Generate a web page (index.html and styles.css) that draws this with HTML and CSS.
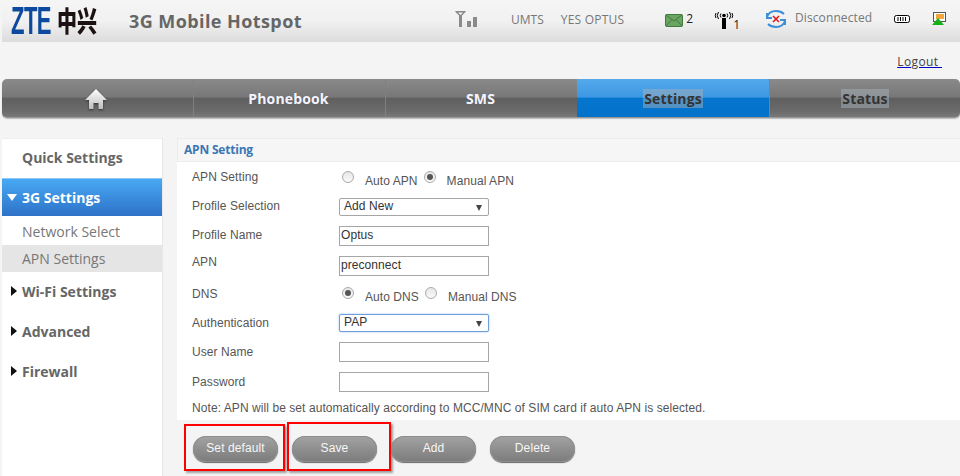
FILE: index.html
```html
<!DOCTYPE html>
<html lang="en">
<head>
<meta charset="utf-8">
<title>3G Mobile Hotspot</title>
<link rel="stylesheet" href="styles.css">
</head>
<body>
<header class="top">
  <div class="logo"><span class="logo-zte">ZTE</span><span class="logo-cn">中兴</span></div>
  <div class="product">3G Mobile Hotspot</div>
  <div class="status">
    <svg class="i-signal" width="24" height="18" viewBox="0 0 24 18"><path d="M1 1h11l-1 1.500-3 3V17H5V5.500L2 2.500zM4 2.500l2.500 2.500L9 2.500z" fill="#8a8a8a" fill-rule="evenodd"/><rect x="13" y="11" width="4" height="6" fill="#8a8a8a"/><rect x="19" y="7" width="4" height="10" fill="#8a8a8a"/></svg>
    <span class="s-net">UMTS</span>
    <span class="s-op">YES OPTUS</span>
    <svg class="i-mail" width="18" height="13" viewBox="0 0 18 13"><rect x=".5" y=".5" width="17" height="12" rx="1" fill="#6aa564" stroke="#3f7a3f"/><path d="M1 1l8 6 8-6M1 12l6-6.500M17 12l-6-6.500" fill="none" stroke="#3f7a3f"/></svg>
    <span class="s-count">2</span>
    <svg class="i-wifi" width="20" height="18" viewBox="0 0 20 18"><path d="M8 7h4v11H8z" fill="#000"/><circle cx="10" cy="4.500" r="1.800" fill="#000"/><path d="M7 2.500Q5.500 4.500 7 6.500M13 2.500q1.500 2 0 4M4.500 1Q2 4.500 4.500 8M15.500 1q2.500 3.500 0 7M2 2Q.5 4.500 2 7M18 2q1.500 2.500 0 5" fill="none" stroke="#000"/></svg>
    <span class="s-wifi-n">1</span>
    <svg class="i-conn" width="20" height="20" viewBox="0 0 20 20"><path d="M1 8Q3 2 10 2q5 0 8 3M1 4v5h5M19 12q-2 6-9 6-5 0-8-3M19 16v-5h-5" fill="none" stroke="#3a8fd6" stroke-width="2"/><path d="M7 7l6 6M13 7l-6 6" stroke="#e01b1b" stroke-width="1.600"/></svg>
    <span class="s-conn">Disconnected</span>
    <svg class="i-batt" width="16" height="8" viewBox="0 0 16 8"><rect x=".5" y=".5" width="15" height="7" rx="2" fill="#fff" stroke="#000"/><path d="M4 2v4M6.500 2v4M9 2v4M11.500 2v4" stroke="#000"/></svg>
    <svg class="i-sim" width="14" height="13" viewBox="0 0 14 13"><rect x="1.500" y=".5" width="12" height="9" fill="#fff" stroke="#555"/><rect x="4" y="2" width="8" height="5" fill="#f4a63c"/><path d="M0 13l6-7 6 7z" fill="#18b018"/></svg>
  </div>
</header>

<div class="logout-row"><a class="logout" href="#">Logout&nbsp;</a></div>

<nav class="nav">
  <a class="nav-item" href="#"><svg class="i-home" width="24" height="22" viewBox="0 0 24 22"><defs><linearGradient id="homeFill" x1="0" y1="0" x2="0" y2="1"><stop offset="0" stop-color="#fff"/><stop offset="1" stop-color="#bdbdbd"/></linearGradient></defs><path d="M12 1L23 12h-4v9h-4.500v-6h-5v6H5v-9H1z" fill="url(#homeFill)"/></svg></a>
  <a class="nav-item" href="#">Phonebook</a>
  <a class="nav-item" href="#">SMS</a>
  <a class="nav-item active" href="#"><span class="sel">Settings</span></a>
  <a class="nav-item last" href="#"><span class="sel">Status</span></a>
</nav>

<div class="main">
  <aside class="side">
    <div class="side-head quick">Quick Settings</div>
    <div class="side-head open"><span class="tri-down"></span>3G Settings</div>
    <div class="side-sub">Network Select</div>
    <div class="side-sub cur">APN Settings</div>
    <div class="side-head"><span class="tri-right"></span>Wi-Fi Settings</div>
    <div class="side-head"><span class="tri-right"></span>Advanced</div>
    <div class="side-head"><span class="tri-right"></span>Firewall</div>
  </aside>

  <section class="content">
    <h2 class="title">APN Setting</h2>
    <div class="form">
      <div class="row r1"><span class="lab">APN Setting</span><div class="radios"><span class="radio"></span><span class="rl">Auto APN</span><span class="radio second on"></span><span class="rl">Manual APN</span></div></div>
      <div class="row r2"><span class="lab">Profile Selection</span><div class="select">Add New<span class="caret"></span></div></div>
      <div class="row r3"><span class="lab">Profile Name</span><div class="input">Optus</div></div>
      <div class="row r4"><span class="lab">APN</span><div class="input">preconnect</div></div>
      <div class="row r5"><span class="lab">DNS</span><div class="radios"><span class="radio on"></span><span class="rl">Auto DNS</span><span class="radio second"></span><span class="rl">Manual DNS</span></div></div>
      <div class="row r6"><span class="lab">Authentication</span><div class="select focus">PAP<span class="caret"></span></div></div>
      <div class="row r7"><span class="lab">User Name</span><div class="input"></div></div>
      <div class="row r8"><span class="lab">Password</span><div class="input"></div></div>
      <p class="note">Note: APN will be set automatically according to MCC/MNC of SIM card if auto APN is selected.</p>
    </div>
    <div class="actions">
      <button class="btn mark-a">Set default</button>
      <button class="btn mark-b">Save</button>
      <button class="btn">Add</button>
      <button class="btn">Delete</button>
    </div>
  </section>
</div>
</body>
</html>
```
FILE: styles.css
```css
* { box-sizing: border-box; }
html, body { margin: 0; padding: 0; }
body {
  width: 960px;
  height: 476px;
  overflow: hidden;
  background: #f4f4f4;
  font-family: "Liberation Sans", Arial, sans-serif;
  font-size: 12px;
  color: #555;
}

/* header */
.top {
  height: 42px;
  margin-left: 2px;
  display: flex;
  align-items: flex-start;
  background: linear-gradient(#f5f5f5 0, #f1f1f1 50%, #dcdcdc 100%);
}
.logo { display: flex; align-items: center; height: 36px; margin: 3px 0 0 9px; width: 118px; }
.logo-zte {
  display: inline-block;
  width: 46px;
  font: bold 38px/36px "Liberation Sans", sans-serif;
  color: #0b4a9e;
  transform: scaleX(.58);
  transform-origin: left center;
  letter-spacing: -1px;
}
.logo-cn {
  font: 900 20px/36px "Noto Sans CJK SC", sans-serif;
  color: #1d1212;
  transform: scaleY(1.4);
}
.product {
  font: 700 18px/24px "Open Sans", sans-serif;
  letter-spacing: .42px;
  color: #666;
  margin-top: 9px;
}
.status { flex: 1; display: flex; height: 42px; font-family: "Open Sans", sans-serif; }
.status svg { display: block; flex: none; }
.i-signal { margin: 10px 0 0 152px; }
.s-net { margin: 11px 0 0 33px; font-size: 12px; line-height: 17px; color: #777; }
.s-op { margin: 11px 0 0 17px; font-size: 12px; line-height: 17px; letter-spacing: .22px; color: #777; }
.i-mail { margin: 14px 0 0 41px; }
.s-count { margin: 11px 0 0 3px; font-size: 12px; line-height: 16px; color: #222; }
.i-wifi { margin: 11px 0 0 21px; }
.s-wifi-n { margin: 17px 0 0 -1px; font-size: 12px; line-height: 16px; color: #222; }
.i-conn { margin: 9px 0 0 26px; }
.s-conn { margin: 9px 0 0 9px; font-size: 12px; line-height: 17px; letter-spacing: .1px; color: #777; }
.i-batt { margin: 15px 0 0 22px; }
.i-sim { margin: 12px 0 0 22px; }

.logout-row { height: 37px; display: flex; justify-content: flex-end; padding: 12px 18px 0 0; }
.logout { font: 12px/16px "Open Sans", sans-serif; letter-spacing: .4px; color: #444; text-decoration-color: #00c; }

/* nav */
.nav {
  height: 39px;
  margin-left: 2px;
  display: grid;
  grid-template-columns: 191px 192px 192px 192px 191px;
  border-radius: 5px;
  overflow: hidden;
  background: linear-gradient(#8a8a8a 0, #777 48%, #5f5f5f 50%, #6b6b6b 85%, #7a7a7a 100%);
  border-bottom: 1px solid #999;
  box-shadow: 0 1px 1px #bbb;
}
.nav-item {
  display: flex;
  align-items: center;
  justify-content: center;
  padding: 1px 2px 0 0;
  border-left: 1px solid #808080;
  font: 700 14px/19px "Open Sans", sans-serif;
  letter-spacing: .15px;
  color: #f4f4ff;
  text-decoration: none;
}
.nav-item:first-child { border-left: 0; padding-right: 4px; }
.nav-item.active { background: linear-gradient(#55a9ec 0, #3d97e2 48%, #0575cd 50%, #0272cb 100%); border-left: 0; padding-right: 0; }
.nav-item.last { padding-right: 0; }
.sel { background: rgba(165,175,185,.5); color: #333; padding: 0 1px; }
.i-home { filter: drop-shadow(0 1px 1px #333); }

/* main */
.main { display: flex; margin: 20px 0 0 2px; height: 338px; }
.side { width: 161px; background: #fff; border-right: 1px solid #e8e8e8; border-top: 1px solid #eee; flex: none; }
.side-head {
  height: 40px;
  padding-left: 20px;
  font: 700 14px/40px "Open Sans", sans-serif;
  color: #666;
  position: relative;
}
.side-head.quick { height: 39px; line-height: 38px; }
.side-head.open {
  height: 38px;
  line-height: 38px;
  color: #fff;
  background: linear-gradient(#48a8f4, #2e72c8);
  border-top: 1px solid #8cc6f5;
}
.side-sub { font: 14px/27px "Open Sans", sans-serif; height: 27px; padding-left: 20px; color: #777; }
.side-sub:nth-child(3) { height: 29px; line-height: 31px; }
.side-sub.cur { background: #e5e5e5; }
.side-sub + .side-head { height: 40px; line-height: 39px; }
.tri-down { position: absolute; left: 5px; top: 15px; border: 5.500px solid transparent; border-top: 7px solid #fff; border-bottom: 0; }
.tri-right { position: absolute; left: 9px; top: 14px; border: 5px solid transparent; border-left: 6px solid #111; border-right: 0; }

.content { margin-left: 14px; flex: 1; }
.title {
  margin: 0;
  height: 24px;
  padding-left: 6px;
  font: 700 12px/22px "Open Sans", sans-serif;
  letter-spacing: -.2px;
  color: #3b76b5;
  background: #f6f6f6;
  border: 1px solid #ececec;
  border-width: 1px 0 1px 1px;
}
.form { background: #fff; height: 258px; padding-left: 15px; letter-spacing: .07px; }
.row { display: flex; align-items: flex-start; padding-top: 8px; line-height: 14px; color: #555; }
.lab { width: 147px; flex: none; }
.r1 { height: 29px; }
.r2 { height: 29px; }
.r3 { height: 27px; }
.r4 { height: 32px; }
.r5 { height: 29px; }
.r6 { height: 29px; }
.r7 { height: 30px; }
.r8 { height: 26px; }
.radios { display: flex; align-items: flex-start; color: #555; padding-left: 3px; }
.r1 .radios { margin-top: -1px; }
.r5 .radios { margin-top: -2px; }
.radio {
  width: 12px;
  height: 12px;
  border-radius: 50%;
  border: 1px solid #aaa;
  background: linear-gradient(#e6e6e6, #fafafa);
  flex: none;
  margin-top: 2px;
  position: relative;
}
.radio.second { margin-left: 6px; }
.radio.on::after { content: ""; position: absolute; left: 2px; top: 2px; width: 6px; height: 6px; border-radius: 50%; background: #555; }
.rl { margin-top: 5px; padding-left: 11px; }
.select, .input {
  width: 150px;
  height: 20px;
  border: 1px solid #a6a6a6;
  background: #fff;
  font: 12px/17px "Liberation Sans", sans-serif;
  color: #333;
  position: relative;
  padding-left: 1px;
}
.select { height: 18px; line-height: 15px; padding-left: 4px; border-radius: 2px; }
.r2 .select { margin-top: -1px; }
.r3 .input { margin-top: -2px; }
.r4 .input { margin-top: 1px; }
.r6 .select { margin-top: -2px; }
.r7 .input, .r8 .input { margin-top: -3px; }
.select.focus { border-color: #6f9fd8; box-shadow: 0 0 2px #8ab6ea; }
.caret { position: absolute; right: 6px; top: 6px; border: 3.500px solid transparent; border-top: 6px solid #444; border-bottom: 0; }
.note { margin: 8px 0 0; line-height: 14px; color: #555; white-space: nowrap; }

.actions { display: flex; gap: 14px; padding: 16px 0 0 16px; }
.btn {
  width: 85px;
  height: 26px;
  padding: 0 0 2px;
  position: relative;
  border: 0;
  border-radius: 13px;
  background: linear-gradient(#a3a3a3, #7b7b7b);
  box-shadow: 0 1px 1px #666, inset 0 0 0 1px #8d8d8d;
  color: #f6f6f6;
  font: 12px/24px "Liberation Sans", sans-serif;
  letter-spacing: .1px;
}
.mark-a::after, .mark-b::after {
  content: "";
  position: absolute;
  border: 2px solid #f00;
  box-shadow: 2px 2px 2px rgba(0,0,0,.35);
}
.mark-a::after { left: -9px; top: -12px; width: 97px; height: 43px; }
.mark-b::after { left: -5px; top: -14px; width: 100px; height: 45px; }
```
